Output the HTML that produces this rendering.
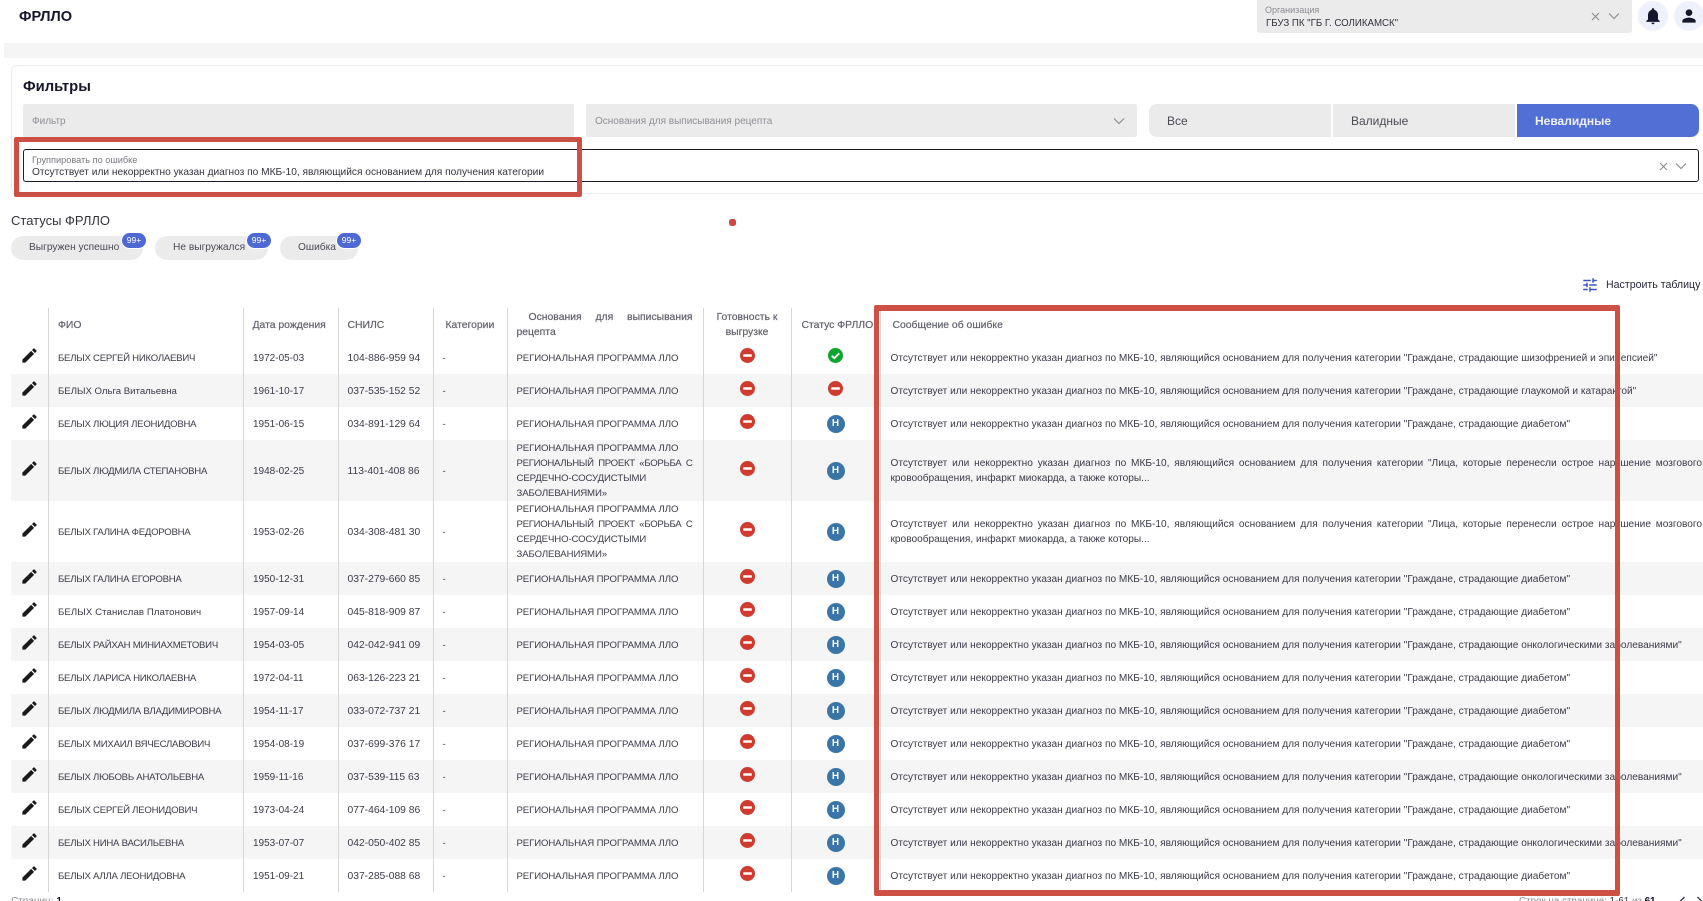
<!DOCTYPE html>
<html lang="ru">
<head>
<meta charset="utf-8">
<title>ФРЛЛО</title>
<style>
html,body{margin:0;padding:0;width:1703px;height:901px;overflow:hidden;background:#fff;}
body{position:relative;font-family:"Liberation Sans","Noto Sans CJK SC",sans-serif;color:#3b3b4a;}
.a{position:absolute;white-space:nowrap;}
.box{position:absolute;box-sizing:border-box;}
.chip{position:absolute;top:236px;height:24px;background:#ebebeb;border-radius:12px;}
.badge{position:absolute;top:233px;width:24px;height:15px;background:#4f69d4;border-radius:8px;color:#fff;font-size:8.5px;line-height:15px;text-align:center;box-shadow:0 0 0 1px #fff;}
.chipt{position:absolute;top:241px;font-size:10.2px;line-height:14px;color:#4a4a55;white-space:nowrap;}
table{position:absolute;left:11px;top:308px;border-collapse:collapse;table-layout:fixed;width:1692px;}
td,th{padding:1px 0 0 9px;border-left:1px solid #d6d6d6;font-size:9.6px;line-height:15px;font-weight:normal;vertical-align:middle;white-space:nowrap;overflow:hidden;box-sizing:border-box;text-align:left;}
td:first-child,th:first-child{border-left:none;padding:0;}
th{height:33px;color:#62626f;font-size:10.4px;font-weight:normal;-webkit-text-stroke:.2px #62626f;}
tr{height:33px;}
tr.t{height:61px;}
tr.s td{background:#f5f5f5;}
td:nth-child(2){letter-spacing:-.25px;padding-left:9.5px;}
td:nth-child(3){font-size:10px;padding-left:9.5px;}
td:nth-child(4){font-size:10.3px;}
td:nth-child(6){letter-spacing:-.1px;}
td:nth-child(9){font-size:10.15px;}
td.m{padding-left:10px;padding-right:1px;}
.j{text-align:justify;text-align-last:justify;white-space:normal;}
.j2{text-align:justify;text-align-last:justify;white-space:normal;letter-spacing:-.3px;}
svg{display:block;}
.ic{margin:0 auto;position:relative;top:-2px;}
td.c{padding:0;text-align:center;}
.h{display:block;width:18px;height:18px;border-radius:50%;background:#3a75a8;color:#fff;font-size:10px;font-weight:bold;line-height:18px;text-align:center;margin:0 auto;}
</style>
</head>
<body>
<svg width="0" height="0" style="position:absolute">
<symbol id="p" viewBox="0 0 24 24"><path fill="#1a1a1a" d="M3 17.25V21h3.75L17.81 9.94l-3.75-3.75L3 17.25zM20.71 7.04c.39-.39.39-1.02 0-1.41l-2.34-2.34c-.39-.39-1.02-.39-1.41 0l-1.83 1.83 3.75 3.75 1.83-1.83z"/></symbol>
<symbol id="r" viewBox="0 0 15 15"><circle cx="7.5" cy="7.5" r="7.5" fill="#d03b30"/><rect x="3.2" y="6.2" width="8.6" height="2.6" rx=".6" fill="#fff"/></symbol>
<symbol id="g" viewBox="0 0 15 15"><circle cx="7.5" cy="7.5" r="7.5" fill="#0aa52c"/><path d="M3.7 7.7l2.6 2.5 5-5" fill="none" stroke="#fff" stroke-width="1.8"/></symbol>
</svg>

<div class="a" style="left:19px;top:7px;font-size:14.6px;font-weight:bold;line-height:20px;color:#16162c;">ФРЛЛО</div>

<div class="box" style="left:1257px;top:0;width:375px;height:33px;background:#ebebeb;border-radius:0 0 3px 3px;"></div>
<div class="a" style="left:1265px;top:4px;font-size:9px;line-height:12px;color:#8a8a92;">Организация</div>
<div class="a" style="left:1266px;top:17px;font-size:9.7px;line-height:13px;color:#33333f;">ГБУЗ ПК "ГБ Г. СОЛИКАМСК"</div>
<svg class="a" style="left:1591px;top:12px" width="9" height="9" viewBox="0 0 9 9"><path d="M1 1l7 7M8 1L1 8" stroke="#8f8f96" stroke-width="1.2" fill="none"/></svg>
<svg class="a" style="left:1608px;top:12px" width="12" height="8" viewBox="0 0 12 8"><path d="M1 1.5l5 5 5-5" stroke="#8f8f96" stroke-width="1.2" fill="none"/></svg>
<div class="box" style="left:1638px;top:1px;width:30px;height:30px;border-radius:50%;background:#eef0fb;"></div>
<svg class="a" style="left:1643px;top:6px" width="20" height="20" viewBox="0 0 24 24"><path fill="#16162c" d="M12 22c1.1 0 2-.9 2-2h-4c0 1.1.89 2 2 2zm6-6v-5c0-3.07-1.64-5.64-4.5-6.32V4c0-.83-.67-1.5-1.5-1.5s-1.5.67-1.5 1.5v.68C7.63 5.36 6 7.92 6 11v5l-2 2v1h16v-1l-2-2z"/></svg>
<div class="box" style="left:1674px;top:1px;width:30px;height:30px;border-radius:50%;background:#eef0fb;"></div>
<svg class="a" style="left:1679px;top:6px" width="20" height="20" viewBox="0 0 24 24"><path fill="#16162c" d="M12 12c2.21 0 4-1.79 4-4s-1.79-4-4-4-4 1.79-4 4 1.79 4 4 4zm0 2c-2.67 0-8 1.34-8 4v2h16v-2c0-2.66-5.33-4-8-4z"/></svg>

<div class="box" style="left:4px;top:43px;width:1699px;height:15px;background:#f5f5f5;"></div>

<div class="box" style="left:11px;top:65px;width:1700px;height:129px;border:1px solid #ececec;border-radius:6px;"></div>
<div class="a" style="left:23px;top:77px;font-size:14.8px;font-weight:bold;line-height:20px;color:#16162c;">Фильтры</div>

<div class="box" style="left:23px;top:104px;width:551px;height:33px;background:#ebebeb;border-radius:2px;"></div>
<div class="a" style="left:32px;top:115px;font-size:10px;line-height:13px;color:#8f8f96;">Фильтр</div>
<div class="box" style="left:586px;top:104px;width:551px;height:33px;background:#ebebeb;border-radius:2px;"></div>
<div class="a" style="left:595px;top:115px;font-size:10px;line-height:13px;color:#8f8f96;">Основания для выписывания рецепта</div>
<svg class="a" style="left:1113px;top:117px" width="12" height="8" viewBox="0 0 12 8"><path d="M1 1.5l5 5 5-5" stroke="#8f8f96" stroke-width="1.2" fill="none"/></svg>

<div class="box" style="left:1149px;top:104px;width:182px;height:33px;background:#ebebeb;border-radius:8px 0 0 8px;"></div>
<div class="a" style="left:1167px;top:114px;font-size:12px;line-height:14px;color:#4a4a55;">Все</div>
<div class="box" style="left:1333px;top:104px;width:182px;height:33px;background:#ebebeb;"></div>
<div class="a" style="left:1351px;top:114px;font-size:12px;line-height:14px;color:#4a4a55;">Валидные</div>
<div class="box" style="left:1517px;top:104px;width:182px;height:33px;background:#526fd6;border-radius:0 8px 8px 0;"></div>
<div class="a" style="left:1535px;top:114px;font-size:12px;font-weight:bold;line-height:14px;color:#eef0fb;">Невалидные</div>

<div class="box" style="left:23px;top:149px;width:1676px;height:33px;border:1px solid #1c1c30;border-radius:3px;"></div>
<div class="a" style="left:32px;top:154px;font-size:9.2px;line-height:12px;color:#77777f;">Группировать по ошибке</div>
<div class="a" style="left:32px;top:166px;font-size:10.17px;line-height:14px;color:#33333f;">Отсутствует или некорректно указан диагноз по МКБ-10, являющийся основанием для получения категории</div>
<svg class="a" style="left:1659px;top:162px" width="9" height="9" viewBox="0 0 9 9"><path d="M1 1l7 7M8 1L1 8" stroke="#8f8f96" stroke-width="1.2" fill="none"/></svg>
<svg class="a" style="left:1675px;top:162px" width="12" height="8" viewBox="0 0 12 8"><path d="M1 1.5l5 5 5-5" stroke="#8f8f96" stroke-width="1.2" fill="none"/></svg>

<div class="a" style="left:11px;top:213px;font-size:13px;line-height:16px;color:#33333f;">Статусы ФРЛЛО</div>
<div class="box" style="left:729px;top:219px;width:7px;height:7px;border-radius:2.5px;background:#d4473c;"></div>

<div class="chip" style="left:11px;width:132px;"></div><div class="chipt" style="left:29px;">Выгружен успешно</div><div class="badge" style="left:122px;">99+</div>
<div class="chip" style="left:155px;width:113px;"></div><div class="chipt" style="left:173px;">Не выгружался</div><div class="badge" style="left:247px;">99+</div>
<div class="chip" style="left:280px;width:78px;"></div><div class="chipt" style="left:298px;">Ошибка</div><div class="badge" style="left:337px;">99+</div>

<svg class="a" style="left:1581px;top:276px" width="18" height="18" viewBox="0 0 24 24"><path fill="#3f55c4" d="M3 17v2h6v-2H3zM3 5v2h10V5H3zm10 16v-2h8v-2h-8v-2h-2v6h2zM7 9v2H3v2h4v2h2V9H7zm14 4v-2H11v2h10zm-6-4h2V7h4V5h-4V3h-2v6z"/></svg>
<div class="a" style="left:1606px;top:278px;font-size:10.6px;line-height:14px;color:#26263a;">Настроить таблицу</div>

<table>
<colgroup><col style="width:37px"><col style="width:195px"><col style="width:95px"><col style="width:95px"><col style="width:74px"><col style="width:196px"><col style="width:88px"><col style="width:89px"><col style="width:823px"></colgroup>
<tr><th></th><th style="padding-left:9.5px">ФИО</th><th>Дата рождения</th><th>СНИЛС</th><th style="padding-left:12px">Категории</th><th style="white-space:normal"><div style="text-align:justify;text-align-last:justify;text-indent:12px;padding-right:10px">Основания для выписывания</div><div>рецепта</div></th><th style="padding:0;text-align:center;white-space:normal">Готовность к<br>выгрузке</th><th style="padding-left:10px">Статус ФРЛЛО</th><th style="padding-left:12px">Сообщение об ошибке</th></tr>

<tr><td><svg class="ic" width="19" height="19"><use href="#p"/></svg></td><td>БЕЛЫХ СЕРГЕЙ НИКОЛАЕВИЧ</td><td>1972-05-03</td><td>104-886-959 94</td><td>-</td><td>РЕГИОНАЛЬНАЯ ПРОГРАММА ЛЛО</td><td class="c"><svg class="ic" width="15" height="15"><use href="#r"/></svg></td><td class="c"><svg class="ic" width="15" height="15"><use href="#g"/></svg></td><td class="m">Отсутствует или некорректно указан диагноз по МКБ-10, являющийся основанием для получения категории "Граждане, страдающие шизофренией и эпилепсией"</td></tr>

<tr class="s"><td><svg class="ic" width="19" height="19"><use href="#p"/></svg></td><td style="letter-spacing:0">БЕЛЫХ Ольга Витальевна</td><td>1961-10-17</td><td>037-535-152 52</td><td>-</td><td>РЕГИОНАЛЬНАЯ ПРОГРАММА ЛЛО</td><td class="c"><svg class="ic" width="15" height="15"><use href="#r"/></svg></td><td class="c"><svg class="ic" width="15" height="15"><use href="#r"/></svg></td><td class="m">Отсутствует или некорректно указан диагноз по МКБ-10, являющийся основанием для получения категории "Граждане, страдающие глаукомой и катарактой"</td></tr>

<tr><td><svg class="ic" width="19" height="19"><use href="#p"/></svg></td><td>БЕЛЫХ ЛЮЦИЯ ЛЕОНИДОВНА</td><td>1951-06-15</td><td>034-891-129 64</td><td>-</td><td>РЕГИОНАЛЬНАЯ ПРОГРАММА ЛЛО</td><td class="c"><svg class="ic" width="15" height="15"><use href="#r"/></svg></td><td class="c"><span class="h">Н</span></td><td class="m">Отсутствует или некорректно указан диагноз по МКБ-10, являющийся основанием для получения категории "Граждане, страдающие диабетом"</td></tr>

<tr class="s t"><td><svg class="ic" width="19" height="19"><use href="#p"/></svg></td><td>БЕЛЫХ ЛЮДМИЛА СТЕПАНОВНА</td><td>1948-02-25</td><td>113-401-408 86</td><td>-</td><td style="padding-right:10px;padding-top:0"><div>РЕГИОНАЛЬНАЯ ПРОГРАММА ЛЛО</div><div class="j2">РЕГИОНАЛЬНЫЙ ПРОЕКТ «БОРЬБА С</div><div>СЕРДЕЧНО-СОСУДИСТЫМИ</div><div>ЗАБОЛЕВАНИЯМИ»</div></td><td class="c"><svg class="ic" width="15" height="15"><use href="#r"/></svg></td><td class="c"><span class="h">Н</span></td><td class="m"><div class="j">Отсутствует или некорректно указан диагноз по МКБ-10, являющийся основанием для получения категории "Лица, которые перенесли острое нарушение мозгового</div><div>кровообращения, инфаркт миокарда, а также которы...</div></td></tr>

<tr class="t"><td><svg class="ic" width="19" height="19"><use href="#p"/></svg></td><td>БЕЛЫХ ГАЛИНА ФЕДОРОВНА</td><td>1953-02-26</td><td>034-308-481 30</td><td>-</td><td style="padding-right:10px;padding-top:0"><div>РЕГИОНАЛЬНАЯ ПРОГРАММА ЛЛО</div><div class="j2">РЕГИОНАЛЬНЫЙ ПРОЕКТ «БОРЬБА С</div><div>СЕРДЕЧНО-СОСУДИСТЫМИ</div><div>ЗАБОЛЕВАНИЯМИ»</div></td><td class="c"><svg class="ic" width="15" height="15"><use href="#r"/></svg></td><td class="c"><span class="h">Н</span></td><td class="m"><div class="j">Отсутствует или некорректно указан диагноз по МКБ-10, являющийся основанием для получения категории "Лица, которые перенесли острое нарушение мозгового</div><div>кровообращения, инфаркт миокарда, а также которы...</div></td></tr>

<tr class="s"><td><svg class="ic" width="19" height="19"><use href="#p"/></svg></td><td>БЕЛЫХ ГАЛИНА ЕГОРОВНА</td><td>1950-12-31</td><td>037-279-660 85</td><td>-</td><td>РЕГИОНАЛЬНАЯ ПРОГРАММА ЛЛО</td><td class="c"><svg class="ic" width="15" height="15"><use href="#r"/></svg></td><td class="c"><span class="h">Н</span></td><td class="m">Отсутствует или некорректно указан диагноз по МКБ-10, являющийся основанием для получения категории "Граждане, страдающие диабетом"</td></tr>

<tr><td><svg class="ic" width="19" height="19"><use href="#p"/></svg></td><td style="letter-spacing:.1px">БЕЛЫХ Станислав Платонович</td><td>1957-09-14</td><td>045-818-909 87</td><td>-</td><td>РЕГИОНАЛЬНАЯ ПРОГРАММА ЛЛО</td><td class="c"><svg class="ic" width="15" height="15"><use href="#r"/></svg></td><td class="c"><span class="h">Н</span></td><td class="m">Отсутствует или некорректно указан диагноз по МКБ-10, являющийся основанием для получения категории "Граждане, страдающие диабетом"</td></tr>

<tr class="s"><td><svg class="ic" width="19" height="19"><use href="#p"/></svg></td><td>БЕЛЫХ РАЙХАН МИНИАХМЕТОВИЧ</td><td>1954-03-05</td><td>042-042-941 09</td><td>-</td><td>РЕГИОНАЛЬНАЯ ПРОГРАММА ЛЛО</td><td class="c"><svg class="ic" width="15" height="15"><use href="#r"/></svg></td><td class="c"><span class="h">Н</span></td><td class="m">Отсутствует или некорректно указан диагноз по МКБ-10, являющийся основанием для получения категории "Граждане, страдающие онкологическими заболеваниями"</td></tr>

<tr><td><svg class="ic" width="19" height="19"><use href="#p"/></svg></td><td>БЕЛЫХ ЛАРИСА НИКОЛАЕВНА</td><td>1972-04-11</td><td>063-126-223 21</td><td>-</td><td>РЕГИОНАЛЬНАЯ ПРОГРАММА ЛЛО</td><td class="c"><svg class="ic" width="15" height="15"><use href="#r"/></svg></td><td class="c"><span class="h">Н</span></td><td class="m">Отсутствует или некорректно указан диагноз по МКБ-10, являющийся основанием для получения категории "Граждане, страдающие диабетом"</td></tr>

<tr class="s"><td><svg class="ic" width="19" height="19"><use href="#p"/></svg></td><td>БЕЛЫХ ЛЮДМИЛА ВЛАДИМИРОВНА</td><td>1954-11-17</td><td>033-072-737 21</td><td>-</td><td>РЕГИОНАЛЬНАЯ ПРОГРАММА ЛЛО</td><td class="c"><svg class="ic" width="15" height="15"><use href="#r"/></svg></td><td class="c"><span class="h">Н</span></td><td class="m">Отсутствует или некорректно указан диагноз по МКБ-10, являющийся основанием для получения категории "Граждане, страдающие диабетом"</td></tr>

<tr><td><svg class="ic" width="19" height="19"><use href="#p"/></svg></td><td>БЕЛЫХ МИХАИЛ ВЯЧЕСЛАВОВИЧ</td><td>1954-08-19</td><td>037-699-376 17</td><td>-</td><td>РЕГИОНАЛЬНАЯ ПРОГРАММА ЛЛО</td><td class="c"><svg class="ic" width="15" height="15"><use href="#r"/></svg></td><td class="c"><span class="h">Н</span></td><td class="m">Отсутствует или некорректно указан диагноз по МКБ-10, являющийся основанием для получения категории "Граждане, страдающие диабетом"</td></tr>

<tr class="s"><td><svg class="ic" width="19" height="19"><use href="#p"/></svg></td><td>БЕЛЫХ ЛЮБОВЬ АНАТОЛЬЕВНА</td><td>1959-11-16</td><td>037-539-115 63</td><td>-</td><td>РЕГИОНАЛЬНАЯ ПРОГРАММА ЛЛО</td><td class="c"><svg class="ic" width="15" height="15"><use href="#r"/></svg></td><td class="c"><span class="h">Н</span></td><td class="m">Отсутствует или некорректно указан диагноз по МКБ-10, являющийся основанием для получения категории "Граждане, страдающие онкологическими заболеваниями"</td></tr>

<tr><td><svg class="ic" width="19" height="19"><use href="#p"/></svg></td><td>БЕЛЫХ СЕРГЕЙ ЛЕОНИДОВИЧ</td><td>1973-04-24</td><td>077-464-109 86</td><td>-</td><td>РЕГИОНАЛЬНАЯ ПРОГРАММА ЛЛО</td><td class="c"><svg class="ic" width="15" height="15"><use href="#r"/></svg></td><td class="c"><span class="h">Н</span></td><td class="m">Отсутствует или некорректно указан диагноз по МКБ-10, являющийся основанием для получения категории "Граждане, страдающие диабетом"</td></tr>

<tr class="s"><td><svg class="ic" width="19" height="19"><use href="#p"/></svg></td><td>БЕЛЫХ НИНА ВАСИЛЬЕВНА</td><td>1953-07-07</td><td>042-050-402 85</td><td>-</td><td>РЕГИОНАЛЬНАЯ ПРОГРАММА ЛЛО</td><td class="c"><svg class="ic" width="15" height="15"><use href="#r"/></svg></td><td class="c"><span class="h">Н</span></td><td class="m">Отсутствует или некорректно указан диагноз по МКБ-10, являющийся основанием для получения категории "Граждане, страдающие онкологическими заболеваниями"</td></tr>

<tr><td><svg class="ic" width="19" height="19"><use href="#p"/></svg></td><td>БЕЛЫХ АЛЛА ЛЕОНИДОВНА</td><td>1951-09-21</td><td>037-285-088 68</td><td>-</td><td>РЕГИОНАЛЬНАЯ ПРОГРАММА ЛЛО</td><td class="c"><svg class="ic" width="15" height="15"><use href="#r"/></svg></td><td class="c"><span class="h">Н</span></td><td class="m">Отсутствует или некорректно указан диагноз по МКБ-10, являющийся основанием для получения категории "Граждане, страдающие диабетом"</td></tr>
</table>

<div class="box" style="left:0;top:892px;width:1703px;height:9px;background:#fff;"></div>
<div class="a" style="left:11px;top:895px;font-size:10px;line-height:14px;color:#8a8a92;">Страниц: <b style="color:#16162c">1</b></div>
<div class="a" style="left:1519px;top:895px;font-size:9.8px;line-height:14px;color:#8a8a92;">Строк на странице: <b style="color:#3b3b4a;font-weight:normal">1-61</b> из <b style="color:#16162c">61</b></div>
<svg class="a" style="left:1678px;top:896px" width="8" height="12" viewBox="0 0 8 12"><path d="M6.5 1l-5 5 5 5" stroke="#33333f" stroke-width="1.3" fill="none"/></svg>
<svg class="a" style="left:1696px;top:896px" width="8" height="12" viewBox="0 0 8 12"><path d="M1.5 1l5 5-5 5" stroke="#33333f" stroke-width="1.3" fill="none"/></svg>

<div class="box" style="left:14px;top:137px;width:568px;height:60px;border:5px solid #cd5045;border-radius:2px;"></div>
<div class="box" style="left:874px;top:305px;width:746px;height:591px;border:5px solid #cd5045;border-top-width:6px;border-bottom-width:6px;border-radius:2px;"></div>
</body>
</html>
